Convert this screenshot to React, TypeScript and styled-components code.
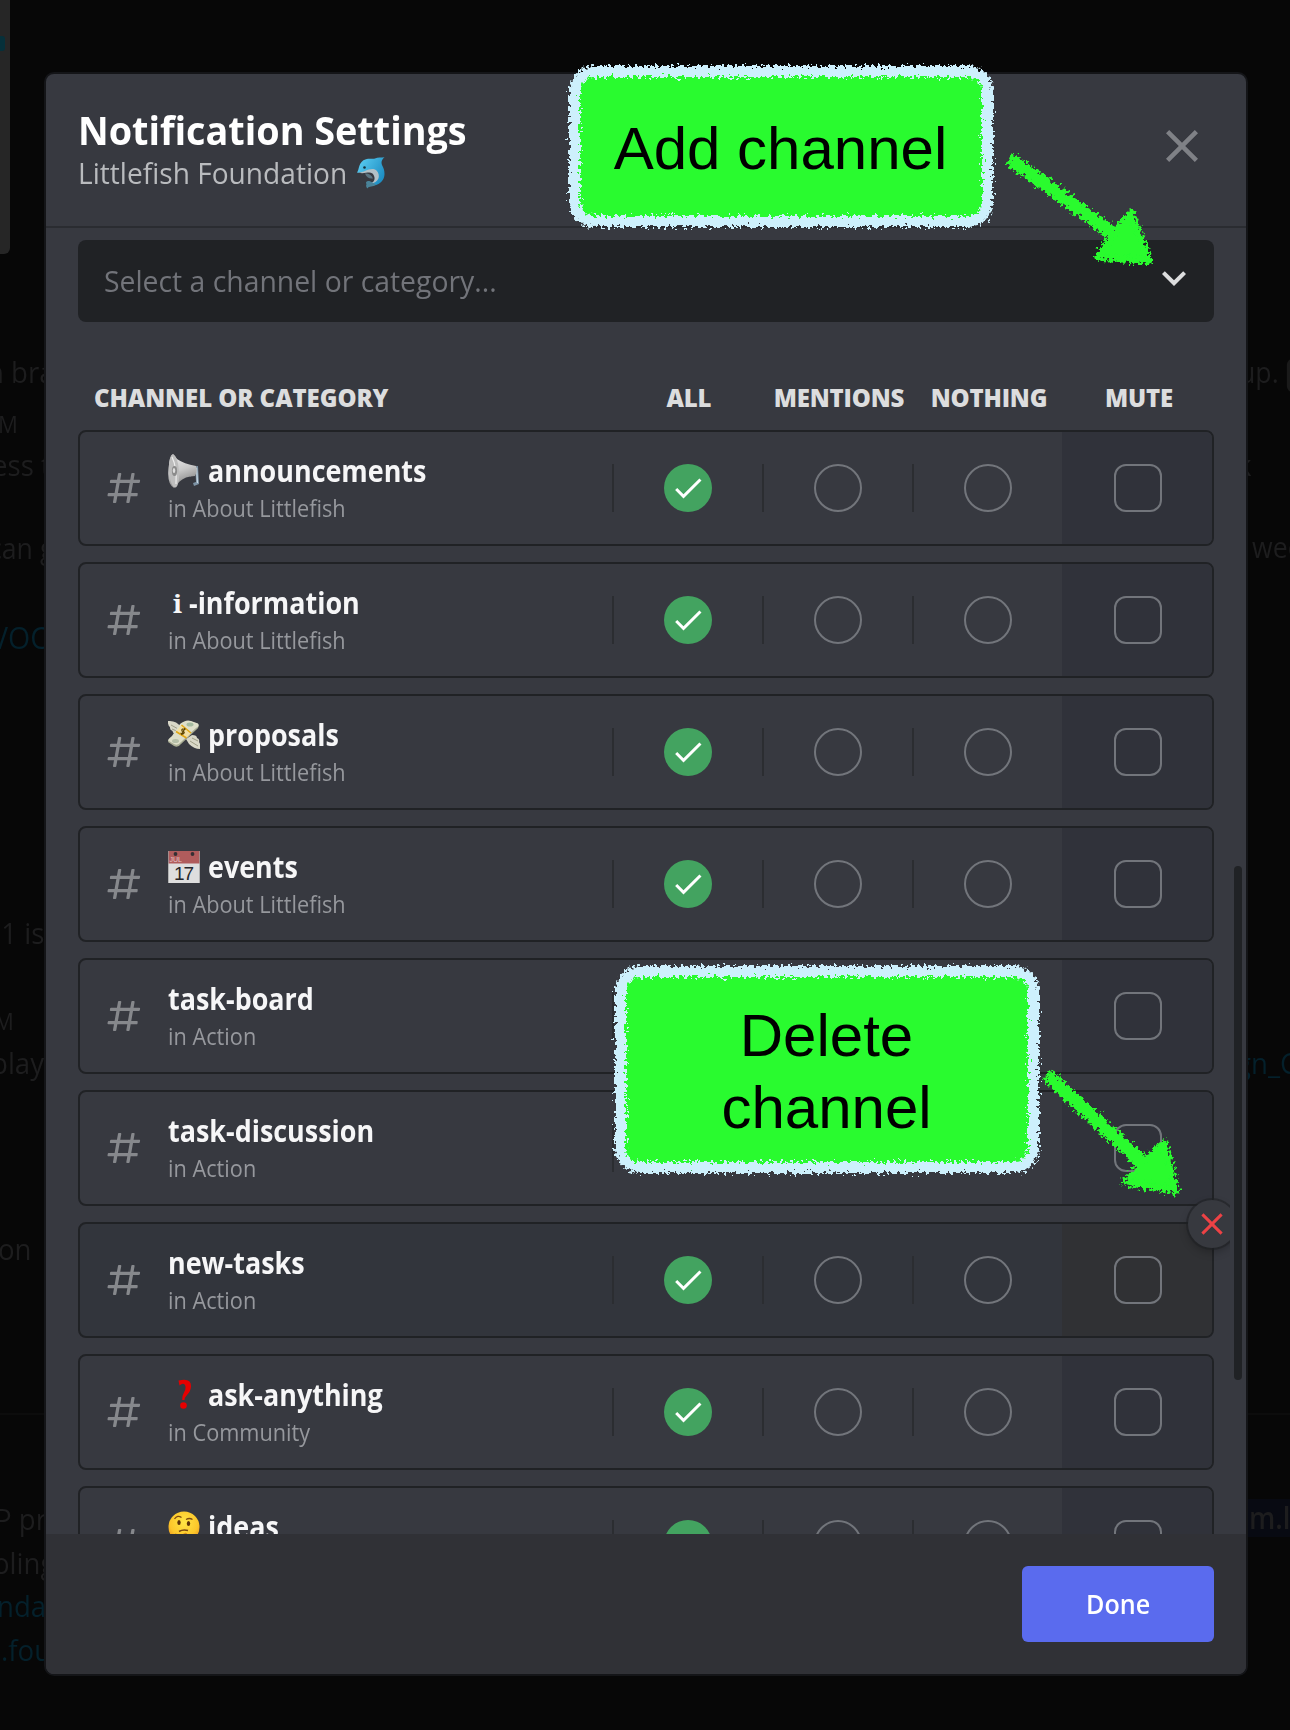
import React from "react";
import styled, { createGlobalStyle } from "styled-components";

const sans = `"Open Sans", "Noto Sans", sans-serif`;

const Global = createGlobalStyle`
  * { box-sizing: border-box; }
  body { margin: 0; background: #070707; }
`;

const Page = styled.div`
  position: relative;
  width: 1290px;
  height: 1730px;
  overflow: hidden;
  display: grid;
  grid-template-columns: 44px 1204px 42px;
  background: #070707;
  font-family: ${sans};
`;

const Narrow = styled.span<{ $by: number; $trim?: number }>`
  display: inline-block;
  white-space: pre;
  transform: scaleX(${(p) => p.$by});
  transform-origin: 0 50%;
  margin-right: ${(p) => -(p.$trim ?? 0)}px;
`;

/* dimmed chat behind the dialog */
const Strip = styled.div<{ $top: number }>`
  min-width: 0;
  height: 1730px;
  overflow: hidden;
  padding-top: ${(p) => p.$top}px;
`;
const SidePanel = styled.div`
  width: 10px;
  height: 254px;
  padding-top: 36px;
  background: #262626;
  border-radius: 0 0 6px 0;
`;
const SideMark = styled.div`
  width: 5px;
  height: 15px;
  background: #06303a;
  border-radius: 0 3px 3px 0;
`;
const ChatLineBox = styled.div<{ $gap: number; $shift: number; $size?: number; $tone?: string; $mark?: boolean }>`
  margin-top: ${(p) => p.$gap}px;
  height: 38px;
  line-height: 38px;
  white-space: pre;
  font-size: ${(p) => p.$size ?? 30}px;
  font-weight: ${(p) => (p.$mark ? 600 : 400)};
  color: ${(p) => p.$tone ?? "#1d1d1e"};
  background: ${(p) => (p.$mark ? "#080a12" : "transparent")};

  ${Narrow} {
    margin-left: ${(p) => p.$shift}px;
  }
`;
const ChatRule = styled.div<{ $gap: number }>`
  margin-top: ${(p) => p.$gap}px;
  height: 2px;
  background: #0c0c0c;
`;
const Keycap = styled.span`
  display: inline-block;
  width: 20px;
  height: 33px;
  margin-left: 9px;
  vertical-align: middle;
  background: #1a1a1a;
  border-radius: 6px;
`;

const Dialog = styled.section`
  align-self: start;
  margin-top: 72px;
  height: 1604px;
  display: flex;
  flex-direction: column;
  border: 2px solid #141518;
  border-radius: 10px;
  background: #373940;
  overflow: hidden;
`;
const Header = styled.header`
  height: 154px;
  padding: 34px 40px 0 32px;
  display: flex;
  justify-content: space-between;
  border-bottom: 2px solid #2a2c31;
`;
const Title = styled.h1`
  margin: 0;
  font-size: 40px;
  line-height: 44px;
  font-weight: 700;
  color: #fff;
`;
const Server = styled.div`
  display: flex;
  align-items: center;
  gap: 10px;
  margin-top: 3px;
  font-size: 30px;
  line-height: 36px;
  color: #b9bbbe;
`;
const CloseButton = styled.button`
  width: 48px;
  height: 48px;
  margin-top: 14px;
  padding: 0;
  border: 0;
  background: none;
  color: #7f8186;
`;

const Body = styled.div`
  flex: 1;
  min-height: 0;
  display: flex;
`;
const Scroller = styled.div`
  width: 1184px;
  padding: 12px 16px 0 32px;
  overflow: hidden;
`;
const Track = styled.div`
  flex: 1;
  padding: 638px 4px 0;
`;
const Thumb = styled.div`
  height: 514px;
  border-radius: 4px;
  background: #202225;
`;

const Select = styled.div`
  height: 82px;
  padding: 0 16px 0 26px;
  display: flex;
  align-items: center;
  justify-content: space-between;
  border-radius: 8px;
  background: #202225;
  color: #dcddde;
`;
const Placeholder = styled.span`
  font-size: 30px;
  line-height: 40px;
  color: #72747a;
`;
const SelectArrow = styled.svg`
  margin-top: -7px;
`;

const HeadRow = styled.div`
  display: flex;
  height: 108px;
  padding: 60px 2px 0 16px;
  font-size: 24px;
  line-height: 32px;
  font-weight: 800;
  letter-spacing: -0.2px;
  color: #dcddde;
`;
const HeadName = styled.div`
  flex: 1;
  letter-spacing: -0.07px;
`;
const HeadCell = styled.div`
  width: 150px;
  text-align: center;
  padding-left: 4px;
`;

const Row = styled.div<{ $hover?: boolean }>`
  position: relative;
  display: flex;
  height: 116px;
  margin-bottom: 16px;
  border: 2px solid #202225;
  border-radius: 8px;
  background: ${(p) => (p.$hover ? "#32353c" : "transparent")};
`;
const Channel = styled.div`
  flex: 1;
  display: flex;
  align-items: center;
  gap: 24px;
  padding-left: 24px;
  color: #86888c;
`;
const Labels = styled.div`
  padding-bottom: 3px;
`;
const Name = styled.div`
  display: flex;
  align-items: center;
  gap: 8px;
  height: 40px;
  font-size: 29.5px;
  line-height: 40px;
  font-weight: 700;
  color: #f6f6f7;
`;
const Parent = styled.div`
  padding-top: 1px;
  height: 32px;
  font-size: 24px;
  line-height: 32px;
  color: #96989d;
`;
const InfoGlyph = styled.span`
  width: 14px;
  margin: 0 -6px 0 5px;
  font-family: "Noto Serif", "DejaVu Serif", serif;
  font-size: 26px;
  line-height: 40px;
`;
const Cell = styled.div<{ $mute?: boolean; $hover?: boolean }>`
  width: 150px;
  display: flex;
  align-items: center;
  justify-content: center;
  padding-left: 2px;
  border-radius: ${(p) => (p.$mute ? "0 6px 6px 0" : "0")};
  background: ${(p) =>
    p.$mute
      ? p.$hover
        ? "#303134"
        : "#30323a"
      : "linear-gradient(#2b2d31, #2b2d31) 0 50% / 2px 48px no-repeat"};
`;
const Radio = styled.div<{ $on?: boolean }>`
  width: 48px;
  height: 48px;
  display: flex;
  align-items: center;
  justify-content: center;
  border-radius: 50%;
  border: ${(p) => (p.$on ? "0" : "2px solid #72757b")};
  background: ${(p) => (p.$on ? "#43a360" : "transparent")};
`;
const Checkbox = styled.div`
  width: 48px;
  height: 48px;
  border: 2px solid #72757b;
  border-radius: 12px;
`;
const RemoveButton = styled.button`
  position: absolute;
  top: -24px;
  right: -24px;
  width: 48px;
  height: 48px;
  padding: 0;
  display: flex;
  align-items: center;
  justify-content: center;
  border: 0;
  border-radius: 50%;
  background: #37393f;
  color: #ed4245;
  box-shadow: 0 0 0 2px rgba(32, 34, 37, 0.6), 0 4px 8px rgba(0, 0, 0, 0.25);
`;

const Footer = styled.footer`
  height: 140px;
  padding: 32px;
  display: flex;
  justify-content: flex-end;
  background: #303136;
`;
const DoneButton = styled.button`
  width: 192px;
  height: 76px;
  padding: 0 0 1px;
  border: 0;
  border-radius: 6px;
  background: #5a6bee;
  color: #fff;
  font-family: ${sans};
  font-size: 27px;
  font-weight: 600;
`;

/* hand-drawn callouts laid over the dialog */
const Callout = styled.div<{ $x: number; $y: number; $h: number }>`
  position: absolute;
  left: ${(p) => p.$x}px;
  top: ${(p) => p.$y}px;
  width: 426px;
  height: ${(p) => p.$h}px;
  display: flex;
  align-items: center;
  justify-content: center;
  text-align: center;
  font-family: "Liberation Sans", Helvetica, Arial, sans-serif;
  font-size: 60px;
  line-height: 72px;
  color: #000;
`;
const CalloutFrame = styled.svg`
  position: absolute;
  inset: 0;
  overflow: visible;
`;
const CalloutText = styled.span`
  position: relative;
  width: 342px;
  padding: 4px 1px 0 0;
`;
const Arrows = styled.svg`
  position: absolute;
  inset: 0;
  pointer-events: none;
`;

const CLOSE = "M18.4 4L12 10.4L5.6 4L4 5.6L10.4 12L4 18.4L5.6 20L12 13.6L18.4 20L20 18.4L13.6 12L20 5.6L18.4 4Z";

function Hash() {
  return (
    <svg width="40" height="40" viewBox="0 0 24 24">
      <path
        fill="currentColor"
        fillRule="evenodd"
        d="M5.88657 21C5.57547 21 5.3399 20.7189 5.39427 20.4126L6.00001 17H2.59511C2.28449 17 2.04905 16.7198 2.10259 16.4138L2.27759 15.4138C2.31946 15.1746 2.52722 15 2.77011 15H6.35001L7.41001 9H4.00511C3.69449 9 3.45905 8.71977 3.51259 8.41381L3.68759 7.41381C3.72946 7.17456 3.93722 7 4.18011 7H7.76001L8.39677 3.41262C8.43914 3.17391 8.64664 3 8.88907 3H9.87344C10.1845 3 10.4201 3.28107 10.3657 3.58738L9.76001 7H15.76L16.3968 3.41262C16.4391 3.17391 16.6466 3 16.8891 3H17.8734C18.1845 3 18.4201 3.28107 18.3657 3.58738L17.76 7H21.1649C21.4755 7 21.711 7.28023 21.6574 7.58619L21.4824 8.58619C21.4406 8.82544 21.2328 9 20.9899 9H17.41L16.35 15H19.7549C20.0655 15 20.301 15.2802 20.2474 15.5862L20.0724 16.5862C20.0306 16.8254 19.8228 17 19.5799 17H16L15.3632 20.5874C15.3209 20.8261 15.1134 21 14.8709 21H13.8866C13.5755 21 13.3399 20.7189 13.3943 20.4126L14 17H8.00001L7.36325 20.5874C7.32088 20.8261 7.11337 21 6.87094 21H5.88657ZM9.41045 9L8.35045 15H14.3504L15.4104 9H9.41045Z"
      />
    </svg>
  );
}

function Check() {
  return (
    <svg width="36" height="36" viewBox="0 0 24 24">
      <path fill="#fff" d="M9 16.17L4.83 12L3.41 13.41L9 19L21 7L19.59 5.59L9 16.17Z" />
    </svg>
  );
}

function Dolphin() {
  return (
    <svg width="28" height="32" viewBox="0 0 28 32">
      <defs>
        <linearGradient id="dolphinBack" x1="0" y1="0" x2="1" y2="0.6">
          <stop offset="0" stopColor="#5fd2f6" />
          <stop offset="1" stopColor="#1f8fc4" />
        </linearGradient>
      </defs>
      <path d="M0 15.500 C2.500 13 1 4.500 9 2.300 C13 1 16 2.500 18 1.500 C21 0 24 1 27.500 0.300 C24.500 3 24 5 25 8 C29 15 28.500 23 21.500 27 C17 29.500 14 28 12 26 C18 25.500 22 22 20 16 C17 10.500 9 15 6 15 C3.500 15.300 2 16 0 15.500Z" fill="url(#dolphinBack)" />
      <path d="M1 15.500 C7 16 14 9 19.500 13.500 C24.500 19 21 26 14 26.500 C18.500 24 18.500 20 15.500 16.500 C12 14 7 17.500 1 15.500Z" fill="#b3c0c6" />
      <path d="M8 16.500 C11 16 14.500 17.500 16 21.500 C12 22 9.500 20.500 8 16.500Z" fill="#5b7480" />
      <path d="M13.500 24.500 C9.500 23 8 26 9.500 27 C8.500 29 9.500 31 10.500 31.500 C12 28.500 16 30.500 19 27.500Z" fill="#4a8399" />
      <circle cx="7.500" cy="10.500" r="1.300" fill="#14303c" />
    </svg>
  );
}

function Megaphone() {
  return (
    <svg width="32" height="40" viewBox="0 0 32 40">
      <defs>
        <linearGradient id="horn" x1="0" y1="0" x2="0.3" y2="1">
          <stop offset="0" stopColor="#f1f1f1" />
          <stop offset="0.55" stopColor="#c9c9c9" />
          <stop offset="1" stopColor="#858585" />
        </linearGradient>
      </defs>
      <path d="M23 16 L30 15 L31 33 L26 35 L25 32 L28 31 L27.500 20 L22 26Z" fill="#7d93a5" />
      <path d="M28.500 17 L29.500 32" stroke="#c8d8e4" strokeWidth="1.200" />
      <path d="M5 3 L9 8 Q16 13 28 15 Q30 20 27 25 Q17 25 11 31 L6 37 Q-1 33 0.500 18 Q1.500 5 5 3Z" fill="url(#horn)" />
      <ellipse cx="6" cy="20" rx="5" ry="16.500" transform="rotate(-4 6 20)" fill="#bdbdbd" />
      <path d="M4 6 Q9 16 8 33" stroke="#eee" strokeWidth="1.200" fill="none" />
      <ellipse cx="6.500" cy="20" rx="2.600" ry="5" fill="#8b8b8b" />
      <ellipse cx="6" cy="19.500" rx="1.300" ry="2.500" fill="#dedede" />
    </svg>
  );
}

function FlyingMoney() {
  return (
    <svg width="32" height="32" viewBox="0 0 32 32">
      <path d="M0 2 Q8 1 13 8 L15 13 L10 16 Q5 15 4.500 12 Q1.500 11 2 8 Q-.5 6 0 2Z" fill="#d9d8c8" />
      <path d="M32 30 Q26 30 21 25 L18 20 L24 16 Q29 16 29 19 Q32 20 31 23 Q33 26 32 30Z" fill="#d9d8c8" />
      <path d="M3 6 L12 11 M4 10 L11 13 M30 27 L22 22 M30 22 L24 19" stroke="#97977f" strokeWidth="0.900" />
      <path d="M12 6 Q18 1 23 2.500 L30 5 Q32 8 28 11 L13 25 Q10 29 6 27 L0 23 Q0 21 4 18Z" fill="#a9ad94" />
      <path d="M12 5 Q18 0 23 2 L30 4.500 Q32 7 28 9 L13 23 Q10 27 6 25 L0 21.500 Q0 20 4 17Z" fill="#dedfca" />
      <ellipse cx="22" cy="5.500" rx="3.500" ry="2" fill="#a5bba0" />
      <ellipse cx="7.500" cy="22" rx="3.500" ry="2" fill="#b5bfa8" />
      <path d="M13.500 6 L23 14 L18.500 19 L8 12.500Z" fill="#f1dfa4" />
      <path d="M13.500 6 L23 14 M8 12.500 L18.500 19" stroke="#e2a816" strokeWidth="1.600" />
      <path d="M17.500 10.500 Q13 9 14 12 Q18 13 15 15 L12.500 14 M17 9 L13.500 16" stroke="#5c4300" strokeWidth="1.200" fill="none" />
    </svg>
  );
}

function Calendar() {
  return (
    <svg width="32" height="32" viewBox="0 0 32 32" fontWeight="400">
      <rect width="32" height="32" fill="#dedede" />
      <rect width="32" height="12.500" fill="#b05c5c" />
      <path d="M0.500 0 V32 M31.500 0 V32" stroke="#9f9f9f" strokeWidth="0.700" />
      <circle cx="7.500" cy="3" r="1.900" fill="#342f33" />
      <circle cx="24.500" cy="3" r="1.900" fill="#342f33" />
      <text x="1.500" y="11.200" fontFamily="Liberation Sans" fontSize="7" fill="#e6c4c4">JUL</text>
      <text x="15.500" y="29" textAnchor="middle" fontFamily="Liberation Sans" fontSize="19" letterSpacing="-1" fill="#26262a">17</text>
    </svg>
  );
}

function Question() {
  return (
    <svg width="32" height="32" viewBox="0 0 32 32">
      <path d="M10.500 1.500 Q23 -1.500 23 7 Q23 12 19 16 Q16.500 18.500 16.500 21 L14.300 21 Q14 17 16 13.500 Q18.500 9 17 6 Q15 3.500 11.500 6.500Z" fill="#e60000" />
      <circle cx="15.500" cy="26.500" r="3.300" fill="#e60000" />
    </svg>
  );
}

function Thinking() {
  return (
    <svg width="32" height="32" viewBox="0 0 32 32">
      <defs>
        <radialGradient id="face" cx="0.5" cy="0.35" r="0.65">
          <stop offset="0" stopColor="#ffe545" />
          <stop offset="0.7" stopColor="#fcc62a" />
          <stop offset="1" stopColor="#eb9620" />
        </radialGradient>
      </defs>
      <circle cx="16" cy="16" r="15.500" fill="url(#face)" />
      <ellipse cx="11" cy="11.500" rx="1.700" ry="2.500" fill="#5c3209" />
      <ellipse cx="20.500" cy="12.500" rx="1.700" ry="2.500" fill="#5c3209" />
      <path d="M6.500 8 Q9.500 3.500 13.500 6.500 M18 8.500 Q21.500 6.500 24.500 8.500" stroke="#7c4a10" strokeWidth="1.300" fill="none" />
      <path d="M11 20.500 Q15 18 20 19.500" stroke="#7c4a10" strokeWidth="1.500" fill="none" />
      <path d="M6 32 L7 23 Q9 22 9.500 26 L18 22 Q20 23 17 25 L17 32Z" fill="#f5a824" stroke="#c97a12" strokeWidth="0.700" />
    </svg>
  );
}

type ChannelData = { name: string; parent: string; icon?: React.ReactNode; hover?: boolean };

const channels: ChannelData[] = [
  { name: "announcements", parent: "About Littlefish", icon: <Megaphone /> },
  { name: "-information", parent: "About Littlefish", icon: <InfoGlyph>i</InfoGlyph> },
  { name: "proposals", parent: "About Littlefish", icon: <FlyingMoney /> },
  { name: "events", parent: "About Littlefish", icon: <Calendar /> },
  { name: "task-board", parent: "Action" },
  { name: "task-discussion", parent: "Action" },
  { name: "new-tasks", parent: "Action", hover: true },
  { name: "ask-anything", parent: "Community", icon: <Question /> },
  { name: "ideas", parent: "Community", icon: <Thinking /> },
];

function ChannelRow({ name, parent, icon, hover }: ChannelData) {
  return (
    <Row $hover={hover}>
      <Channel>
        <Hash />
        <Labels>
          <Name>
            {icon}
            <Narrow $by={0.912}>{name}</Narrow>
          </Name>
          <Parent><Narrow $by={0.905}>in {parent}</Narrow></Parent>
        </Labels>
      </Channel>
      <Cell><Radio $on><Check /></Radio></Cell>
      <Cell><Radio /></Cell>
      <Cell><Radio /></Cell>
      <Cell $mute $hover={hover}><Checkbox /></Cell>
      {hover && (
        <RemoveButton>
          <svg width="32" height="32" viewBox="0 0 24 24"><path fill="currentColor" d={CLOSE} /></svg>
        </RemoveButton>
      )}
    </Row>
  );
}

function Note({ x, y, h, children }: { x: number; y: number; h: number; children: React.ReactNode }) {
  return (
    <Callout $x={x} $y={y} $h={h}>
      <CalloutFrame width="426" height={h}>
        <rect x="8" y="8" width="410" height={h - 16} rx="17" fill="#29fb2f" />
        <rect x="6.500" y="6.500" width="413" height={h - 13} rx="19" fill="none" stroke="#cdf0fc" strokeWidth="11" filter="url(#chalk)" />
      </CalloutFrame>
      <CalloutText>{children}</CalloutText>
    </Callout>
  );
}

function ChatLine({ children, ...rest }: React.ComponentProps<typeof ChatLineBox>) {
  return (
    <ChatLineBox {...rest}>
      <Narrow $by={0.92}>{children}</Narrow>
    </ChatLineBox>
  );
}

const teal = "#04202b";

export default function App() {
  return (
    <Page>
      <Global />
      <Strip $top={0}>
        <SidePanel><SideMark /></SidePanel>
        <ChatLine $gap={99} $shift={-13}>n bra</ChatLine>
        <ChatLine $gap={14} $shift={-2} $size={24}>M</ChatLine>
        <ChatLine $gap={3} $shift={-8}>ess t</ChatLine>
        <ChatLine $gap={45} $shift={-11} $size={29}>can g</ChatLine>
        <ChatLine $gap={51} $shift={-9} $size={31} $tone={teal}>VOC</ChatLine>
        <ChatLine $gap={258} $shift={-6}>.1 is</ChatLine>
        <ChatLine $gap={50} $shift={-6} $size={24}>M</ChatLine>
        <ChatLine $gap={4} $shift={-9}>play,</ChatLine>
        <ChatLine $gap={148} $shift={-2}>on</ChatLine>
        <ChatRule $gap={145} />
        <ChatLine $gap={85} $shift={-5}>P pr</ChatLine>
        <ChatLine $gap={6} $shift={-7}>oling</ChatLine>
        <ChatLine $gap={5} $shift={-3} $tone={teal}>nda</ChatLine>
        <ChatLine $gap={6} $shift={1} $tone={teal}>.foundation</ChatLine>
      </Strip>

      <Dialog>
        <Header>
          <div>
            <Title><Narrow $by={0.944}>Notification Settings</Narrow></Title>
            <Server><Narrow $by={0.937} $trim={18}>Littlefish Foundation</Narrow><Dolphin /></Server>
          </div>
          <CloseButton>
            <svg width="48" height="48" viewBox="0 0 24 24"><path fill="currentColor" d={CLOSE} /></svg>
          </CloseButton>
        </Header>
        <Body>
          <Scroller>
            <Select>
              <Placeholder><Narrow $by={0.945}>Select a channel or category...</Narrow></Placeholder>
              <SelectArrow width="48" height="48" viewBox="0 0 24 24">
                <path fill="currentColor" d="M16.590 8.590L12 13.170L7.410 8.590L6 10L12 16L18 10L16.590 8.590Z" />
              </SelectArrow>
            </Select>
            <HeadRow>
              <HeadName>CHANNEL OR CATEGORY</HeadName>
              <HeadCell>ALL</HeadCell>
              <HeadCell>MENTIONS</HeadCell>
              <HeadCell>NOTHING</HeadCell>
              <HeadCell>MUTE</HeadCell>
            </HeadRow>
            {channels.map((c) => <ChannelRow key={c.name} {...c} />)}
          </Scroller>
          <Track><Thumb /></Track>
        </Body>
        <Footer><DoneButton><Narrow $by={0.93} $trim={4}>Done</Narrow></DoneButton></Footer>
      </Dialog>

      <Strip $top={353}>
        <ChatLine $gap={0} $shift={-9} $size={29}>up.<Keycap /></ChatLine>
        <ChatLine $gap={55} $shift={-11}>k</ChatLine>
        <ChatLine $gap={44} $shift={4} $size={29}>week</ChatLine>
        <ChatLine $gap={478} $shift={-12} $tone={teal}>gn_C</ChatLine>
        <ChatRule $gap={331} />
        <ChatLine $gap={84} $shift={-15} $mark>em.l</ChatLine>
      </Strip>

      <Note x={568} y={65} h={163}>Add channel</Note>
      <Note x={614} y={965} h={209}>Delete channel</Note>
      <Arrows width="1290" height="1730">
        <defs>
          <filter id="chalk" x="-5%" y="-10%" width="110%" height="120%">
            <feTurbulence type="fractalNoise" baseFrequency="0.3" numOctaves="3" seed="4" result="noise" />
            <feDisplacementMap in="SourceGraphic" in2="noise" scale="12" xChannelSelector="R" yChannelSelector="G" />
          </filter>
        </defs>
        <g filter="url(#chalk)" fill="#29fb2f" stroke="#29fb2f" strokeLinejoin="round">
          <path d="M1010 159 L1116 236" strokeWidth="13.500" />
          <path d="M1131 213 L1149 261 L1098 257 L1113 235Z" strokeWidth="7" />
          <path d="M1047 1075 L1146 1166" strokeWidth="13.500" />
          <path d="M1164 1143 L1176 1191 L1126 1182 L1144 1162Z" strokeWidth="7" />
        </g>
      </Arrows>
    </Page>
  );
}
